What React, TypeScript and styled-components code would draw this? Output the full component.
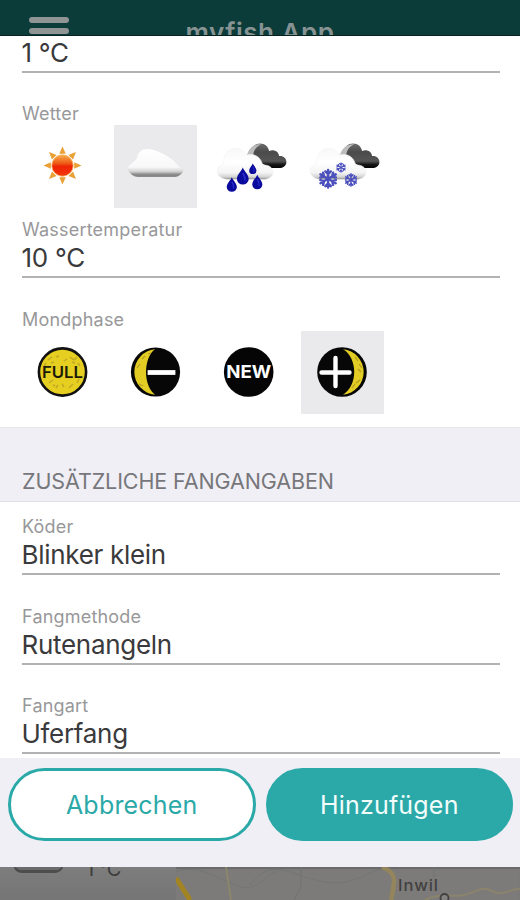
import React from "react";
import styled, { createGlobalStyle } from "styled-components";

const GlobalStyle = createGlobalStyle`
  * { box-sizing: border-box; }
  body { margin: 0; background: #fff; font-family: Inter, "Liberation Sans", sans-serif; }
`;

const Screen = styled.div`
  width: 520px;
  height: 900px;
  overflow: hidden;
  display: flex;
  flex-direction: column;
`;

const AppBar = styled.header`
  height: 36px;
  flex: none;
  overflow: hidden;
  background: #0c3c3a;
  border-bottom: 1px solid #062321;
  display: grid;
  grid-template-columns: 160px 200px 160px;
  align-items: start;
`;

const MenuIcon = styled.div`
  margin: 17px 0 0 29px;
  width: 40px;
  display: flex;
  flex-direction: column;
  gap: 5px;
`;

const MenuBar = styled.span`
  height: 6px;
  flex: none;
  border-radius: 3px;
  background: #8f9594;
`;

const AppTitle = styled.h1`
  margin: 18px 0 0;
  font-size: 26px;
  line-height: 30px;
  font-weight: 600;
  letter-spacing: 0.5px;
  text-align: center;
  white-space: nowrap;
  color: #879392;
`;

const Modal = styled.main`
  height: 831px;
  flex: none;
  display: flex;
  flex-direction: column;
  background: #fff;
`;

const Scroll = styled.div`
  height: 722px;
  flex: none;
  overflow: hidden;
`;

const Group = styled.section<{ $height: number; $top?: number }>`
  height: ${(p) => p.$height}px;
  padding: ${(p) => p.$top ?? 0}px 20px 0 22px;
`;

const Field = styled.div<{ $gap: number }>`
  display: flex;
  flex-direction: column;
  margin-bottom: ${(p) => p.$gap}px;
`;

const Label = styled.div`
  height: 22px;
  font-size: 18px;
  line-height: 22px;
  letter-spacing: 0.2px;
  color: #98989a;
`;

const Value = styled.div`
  height: 37px;
  padding-top: 1px;
  margin-left: -0.5px;
  font-size: 26px;
  line-height: 31px;
  font-weight: 400;
  letter-spacing: -0.3px;
  color: #3a3a3c;
  border-bottom: 2px solid #b1b3b3;
`;

const Choices = styled.div`
  display: flex;
  gap: 10.3px;
  margin-left: -1px;
`;

const Choice = styled.div<{ $selected?: boolean }>`
  width: 83px;
  height: 83px;
  flex: none;
  background: ${(p) => (p.$selected ? "#eaeaec" : "transparent")};
  svg { display: block; }
`;

const SectionHeader = styled.h2`
  margin: 0;
  height: 75px;
  padding: 40px 0 0 22px;
  background: #f0eff5;
  border-top: 1px solid #e7e7ea;
  border-bottom: 1px solid #dfdfe4;
  font-size: 21.5px;
  line-height: 26px;
  font-weight: 400;
  letter-spacing: -0.1px;
  color: #77777b;
`;

const Footer = styled.footer`
  height: 109px;
  flex: none;
  display: flex;
  gap: 10px;
  padding: 10px 7px 0 8px;
  background: #f0eff5;
`;

const Button = styled.button<{ $primary?: boolean }>`
  flex: 1;
  height: 73px;
  padding: 0;
  border: 3px solid #2ba9a8;
  border-radius: 37px;
  background: ${(p) => (p.$primary ? "#2ba9a8" : "#fff")};
  color: ${(p) => (p.$primary ? "#f2fdfc" : "#2ba9a8")};
  font: 400 25px/30px Inter, "Liberation Sans", sans-serif;
  letter-spacing: 0.2px;
`;

const Backdrop = styled.div`
  height: 33px;
  flex: none;
  overflow: hidden;
  display: flex;
  background: #7d7b7a;
  box-shadow: inset 0 2px 1px #6b6a6a;
`;

const WeatherPeek = styled.div`
  width: 176px;
  flex: none;
  padding-left: 12px;
  display: flex;
  gap: 22px;
  background: linear-gradient(180deg, #7d7d7d, #757575);
`;

const PeekTemp = styled.span`
  margin-top: -11px;
  font-size: 20px;
  line-height: 26px;
  letter-spacing: -0.6px;
  color: #3d3d3d;
`;

const iconBox = { width: 83, height: 83, viewBox: "0 0 83 83" };

function Sun() {
  return (
    <svg {...iconBox}>
      <defs>
        <linearGradient id="sunCore" x1="0" y1="0" x2="0" y2="1">
          <stop offset="0" stopColor="#f8b04a" />
          <stop offset="0.4" stopColor="#ee5a17" />
          <stop offset="0.55" stopColor="#ee2404" />
          <stop offset="1" stopColor="#f23a0c" />
        </linearGradient>
      </defs>
      {[0, 45, 90, 135, 180, 225, 270, 315].map((a) => (
        <path key={a} d="M38.3 28.8 41.5 21.5 44.7 28.8Z" fill="#e9a035" transform={`rotate(${a} 41.5 40.5)`} />
      ))}
      <circle cx="41.5" cy="40.5" r="10.7" fill="url(#sunCore)" stroke="#f6b868" strokeWidth="0.8" />
    </svg>
  );
}

function Cloud() {
  return (
    <svg {...iconBox}>
      <defs>
        <linearGradient id="cloudFill" x1="0" y1="0" x2="0" y2="1">
          <stop offset="0" stopColor="#fff" />
          <stop offset="0.65" stopColor="#f8f8f8" />
          <stop offset="0.8" stopColor="#d4d4d4" />
          <stop offset="0.92" stopColor="#858585" />
          <stop offset="1" stopColor="#8c8c8c" />
        </linearGradient>
      </defs>
      <path
        d="M13.5 44C13.5 40 20 38 23 33 24 27 28 23.5 34 24 44 25 54 31 60 36 63 39 64 42 69.5 44.5 70 47 65 52 61 52H24C19 52 14.5 47 13.5 44Z"
        fill="url(#cloudFill)"
      />
    </svg>
  );
}

function StormClouds({ id }: { id: string }) {
  return (
    <>
      <defs>
        <linearGradient id={`${id}Dark`} x1="0" y1="0" x2="0" y2="1">
          <stop offset="0" stopColor="#6d6d6d" />
          <stop offset="0.35" stopColor="#4b4b4b" />
          <stop offset="0.72" stopColor="#555" />
          <stop offset="0.86" stopColor="#151515" />
          <stop offset="1" stopColor="#050505" />
        </linearGradient>
        <linearGradient id={`${id}Light`} x1="0" y1="0" x2="0" y2="1">
          <stop offset="0" stopColor="#f8f8f8" />
          <stop offset="0.45" stopColor="#fff" />
          <stop offset="0.78" stopColor="#f4f4f4" />
          <stop offset="0.92" stopColor="#d3d3d3" />
          <stop offset="1" stopColor="#858585" />
        </linearGradient>
      </defs>
      <path
        d="M42 32C43 23 47 18.5 53 18.5 58 18.5 61 21.5 62 26 66 24 71.5 26 72 31 76 30.5 79.5 33 79.3 37.5 79 41 76 43 72 43H64L54 38Z"
        fill={`url(#${id}Dark)`}
      />
      <path d="M39.5 31.5C41 24 46 18.8 54 19.2 51 21 47.5 22.5 46 30L44 34Z" fill="#bdbdbd" />
      <path
        d="M10 46.5C10 42.5 13 40 16.5 38.5 16 30 21 23.5 29 23.5 34 23 37 26 39 30 48 27.5 54.5 33 55.5 40.5 61 39 66 42.5 66 47.5 65.5 52 61 54.5 56 54.5H22C15 54.5 10.5 51 10 46.5Z"
        fill={`url(#${id}Light)`}
        stroke="#f1f1f1"
        strokeWidth="0.6"
      />
    </>
  );
}

function Drop({ x, y, s }: { x: number; y: number; s: number }) {
  return (
    <g transform={`translate(${x} ${y}) scale(${s})`}>
      <path d="M0-8.5C1.5-4.5 5.9-1.5 5.9 3A5.9 5.5 0 0 1-5.9 3C-5.9-1.5-1.5-4.5 0-8.5Z" fill="#0a0a9c" />
      <path d="M0-3C1.5 0 3 1 1.8 4.5" fill="none" stroke="#2b2bd0" strokeWidth="1.6" />
    </g>
  );
}

function Rain() {
  return (
    <svg {...iconBox}>
      <g transform="translate(-0.9 0)">
        <StormClouds id="rain" />
        <Drop x={35.7} y={51} s={1} />
        <Drop x={45.7} y={43.8} s={0.62} />
        <Drop x={24.7} y={59.5} s={0.86} />
        <Drop x={50.2} y={57} s={0.86} />
      </g>
    </svg>
  );
}

function Flake({ x, y, s, w }: { x: number; y: number; s: number; w: number }) {
  return (
    <g transform={`translate(${x} ${y}) scale(${s})`} stroke="#4b50bd" strokeWidth={w} fill="none" strokeLinecap="round">
      {[0, 60, 120, 180, 240, 300].map((a) => (
        <path key={a} d="M0 0V-9M-2.8-7.5 0-4.8 2.8-7.5" transform={`rotate(${a})`} />
      ))}
    </g>
  );
}

function Snow() {
  return (
    <svg {...iconBox}>
      <g transform="translate(-0.9 0)">
        <StormClouds id="snow" />
        <Flake x={28} y={53.8} s={0.98} w={2.5} />
        <Flake x={40.9} y={42.5} s={0.52} w={2.2} />
        <Flake x={50.9} y={55} s={0.68} w={2.3} />
      </g>
    </svg>
  );
}

function MoonTexture() {
  return (
    <path
      d="M27 29l4-3M35 26l3-1M49 26l4 3M28 52l4-3M35 57l2-3M48 57l4-4M56 52l2-4M23 35l2-3M43 30l3-2M57 32l2 3M41 53l2 3M30 32l3-1M51 31l3 1M32 54l2 1M53 29l3-3"
      stroke="#a8902c"
      strokeWidth="1.5"
      fill="none"
      opacity="0.6"
    />
  );
}

const MoonText = styled.text`
  font-family: Inter, "Liberation Sans", sans-serif;
  text-anchor: middle;
`;

function FullMoon() {
  return (
    <svg {...iconBox}>
      <circle cx="41.5" cy="41" r="23.6" fill="#e6cf20" stroke="#111" strokeWidth="2.6" />
      <MoonTexture />
      <MoonText x="41.5" y="46.5" fontSize="16.5" fontWeight="600" textLength="41" lengthAdjust="spacingAndGlyphs" fill="#1c1a08">FULL</MoonText>
    </svg>
  );
}

function WaningMoon() {
  return (
    <svg {...iconBox}>
      <circle cx="41.5" cy="41" r="24.6" fill="#070707" />
      <path d="M41 18.3A22.8 22.8 0 0 0 41 63.7C29 55 29 27 41 18.3Z" fill="#e3cc24" />
      <path d="M28 28l3-3M23 37l3-4M25 53l4 2M34 23l3-1" stroke="#b49c25" strokeWidth="1.2" />
      <path d="M36 41.5H59" stroke="#fff" strokeWidth="4.8" strokeLinecap="square" />
    </svg>
  );
}

function NewMoon() {
  return (
    <svg {...iconBox}>
      <circle cx="40.7" cy="41" r="24.8" fill="#050505" />
      <MoonText x="40.7" y="47" fontSize="17.5" fontWeight="700" textLength="45" lengthAdjust="spacingAndGlyphs" fill="#fff">NEW</MoonText>
    </svg>
  );
}

function WaxingMoon() {
  return (
    <svg {...iconBox}>
      <circle cx="41" cy="41" r="24.8" fill="#070707" />
      <path d="M42 18.3A22.8 22.8 0 0 1 42 63.7C57 55 57 27 42 18.3Z" fill="#e3cc24" />
      <path d="M54 26l3 4M57 38l3 3M55 52l4-3M51 57l3-4M58 33l3 4" stroke="#b49c25" strokeWidth="1.2" />
      <path d="M34.5 27V55M20.5 41.5H48.500" stroke="#fff" strokeWidth="4.4" strokeLinecap="round" />
    </svg>
  );
}

const PeekCloud = () => (
  <svg width="52" height="33" viewBox="0 0 52 33">
    <path d="M2 0H51C50 4 46 6 41 6H12C6 6 3 4 2 0Z" fill="#4d4d4d" />
    <path d="M3 0H50L46 3H8Z" fill="#6b6b6b" />
  </svg>
);

const MapLabel = styled.text`
  font: 500 16.5px Inter, "Liberation Sans", sans-serif;
  letter-spacing: 0.9px;
`;

const MapPeek = () => (
  <svg width="344" height="33" viewBox="176 0 344 33">
    <g fill="none">
      <path d="M176 5Q190 0 202 4T232 17 264 13 275 7M250 18C264 1 274 0 290 5S330 20 350 14 368 3 390 2" stroke="#737675" strokeWidth="1" />
      <path d="M301 0V20L294 33M434 0V10" stroke="#727372" strokeWidth="1" />
      <path d="M226 0 229 20 231 33" stroke="#8c866b" strokeWidth="1.8" />
      <path d="M176 11 190 33" stroke="#a38422" strokeWidth="5" />
      <path d="M382 0Q395 5 394 15T391 33" stroke="#94855d" strokeWidth="4.5" />
      <path d="M425 33C440 25 450 31 464 28S480 18 492 24 508 22 520 22" stroke="#8a846c" strokeWidth="2" />
    </g>
    <circle cx="444.5" cy="31" r="4" fill="#858382" stroke="#424141" strokeWidth="1.8" />
    <MapLabel x="398" y="24" fill="#414040">Inwil</MapLabel>
  </svg>
);

export default function App() {
  return (
    <>
      <GlobalStyle />
      <Screen>
        <AppBar>
          <MenuIcon>
            <MenuBar />
            <MenuBar />
            <MenuBar />
          </MenuIcon>
          <AppTitle>myfish App</AppTitle>
        </AppBar>
        <Modal>
          <Scroll>
            <Group $height={67}>
              <Value>1 °C</Value>
            </Group>
            <Group $height={116}>
              <Label>Wetter</Label>
              <Choices>
                <Choice><Sun /></Choice>
                <Choice $selected><Cloud /></Choice>
                <Choice><Rain /></Choice>
                <Choice><Snow /></Choice>
              </Choices>
            </Group>
            <Group $height={208}>
              <Field $gap={31}>
                <Label>Wassertemperatur</Label>
                <Value>10 °C</Value>
              </Field>
              <Label>Mondphase</Label>
              <Choices>
                <Choice><FullMoon /></Choice>
                <Choice><WaningMoon /></Choice>
                <Choice><NewMoon /></Choice>
                <Choice $selected><WaxingMoon /></Choice>
              </Choices>
            </Group>
            <SectionHeader>ZUSÄTZLICHE FANGANGABEN</SectionHeader>
            <Group $height={256} $top={14}>
              <Field $gap={30.7}>
                <Label>Köder</Label>
                <Value>Blinker klein</Value>
              </Field>
              <Field $gap={30.7}>
                <Label>Fangmethode</Label>
                <Value>Rutenangeln</Value>
              </Field>
              <Field $gap={0}>
                <Label>Fangart</Label>
                <Value>Uferfang</Value>
              </Field>
            </Group>
          </Scroll>
          <Footer>
            <Button>Abbrechen</Button>
            <Button $primary>Hinzufügen</Button>
          </Footer>
        </Modal>
        <Backdrop>
          <WeatherPeek>
            <PeekCloud />
            <PeekTemp>1 °C</PeekTemp>
          </WeatherPeek>
          <MapPeek />
        </Backdrop>
      </Screen>
    </>
  );
}
